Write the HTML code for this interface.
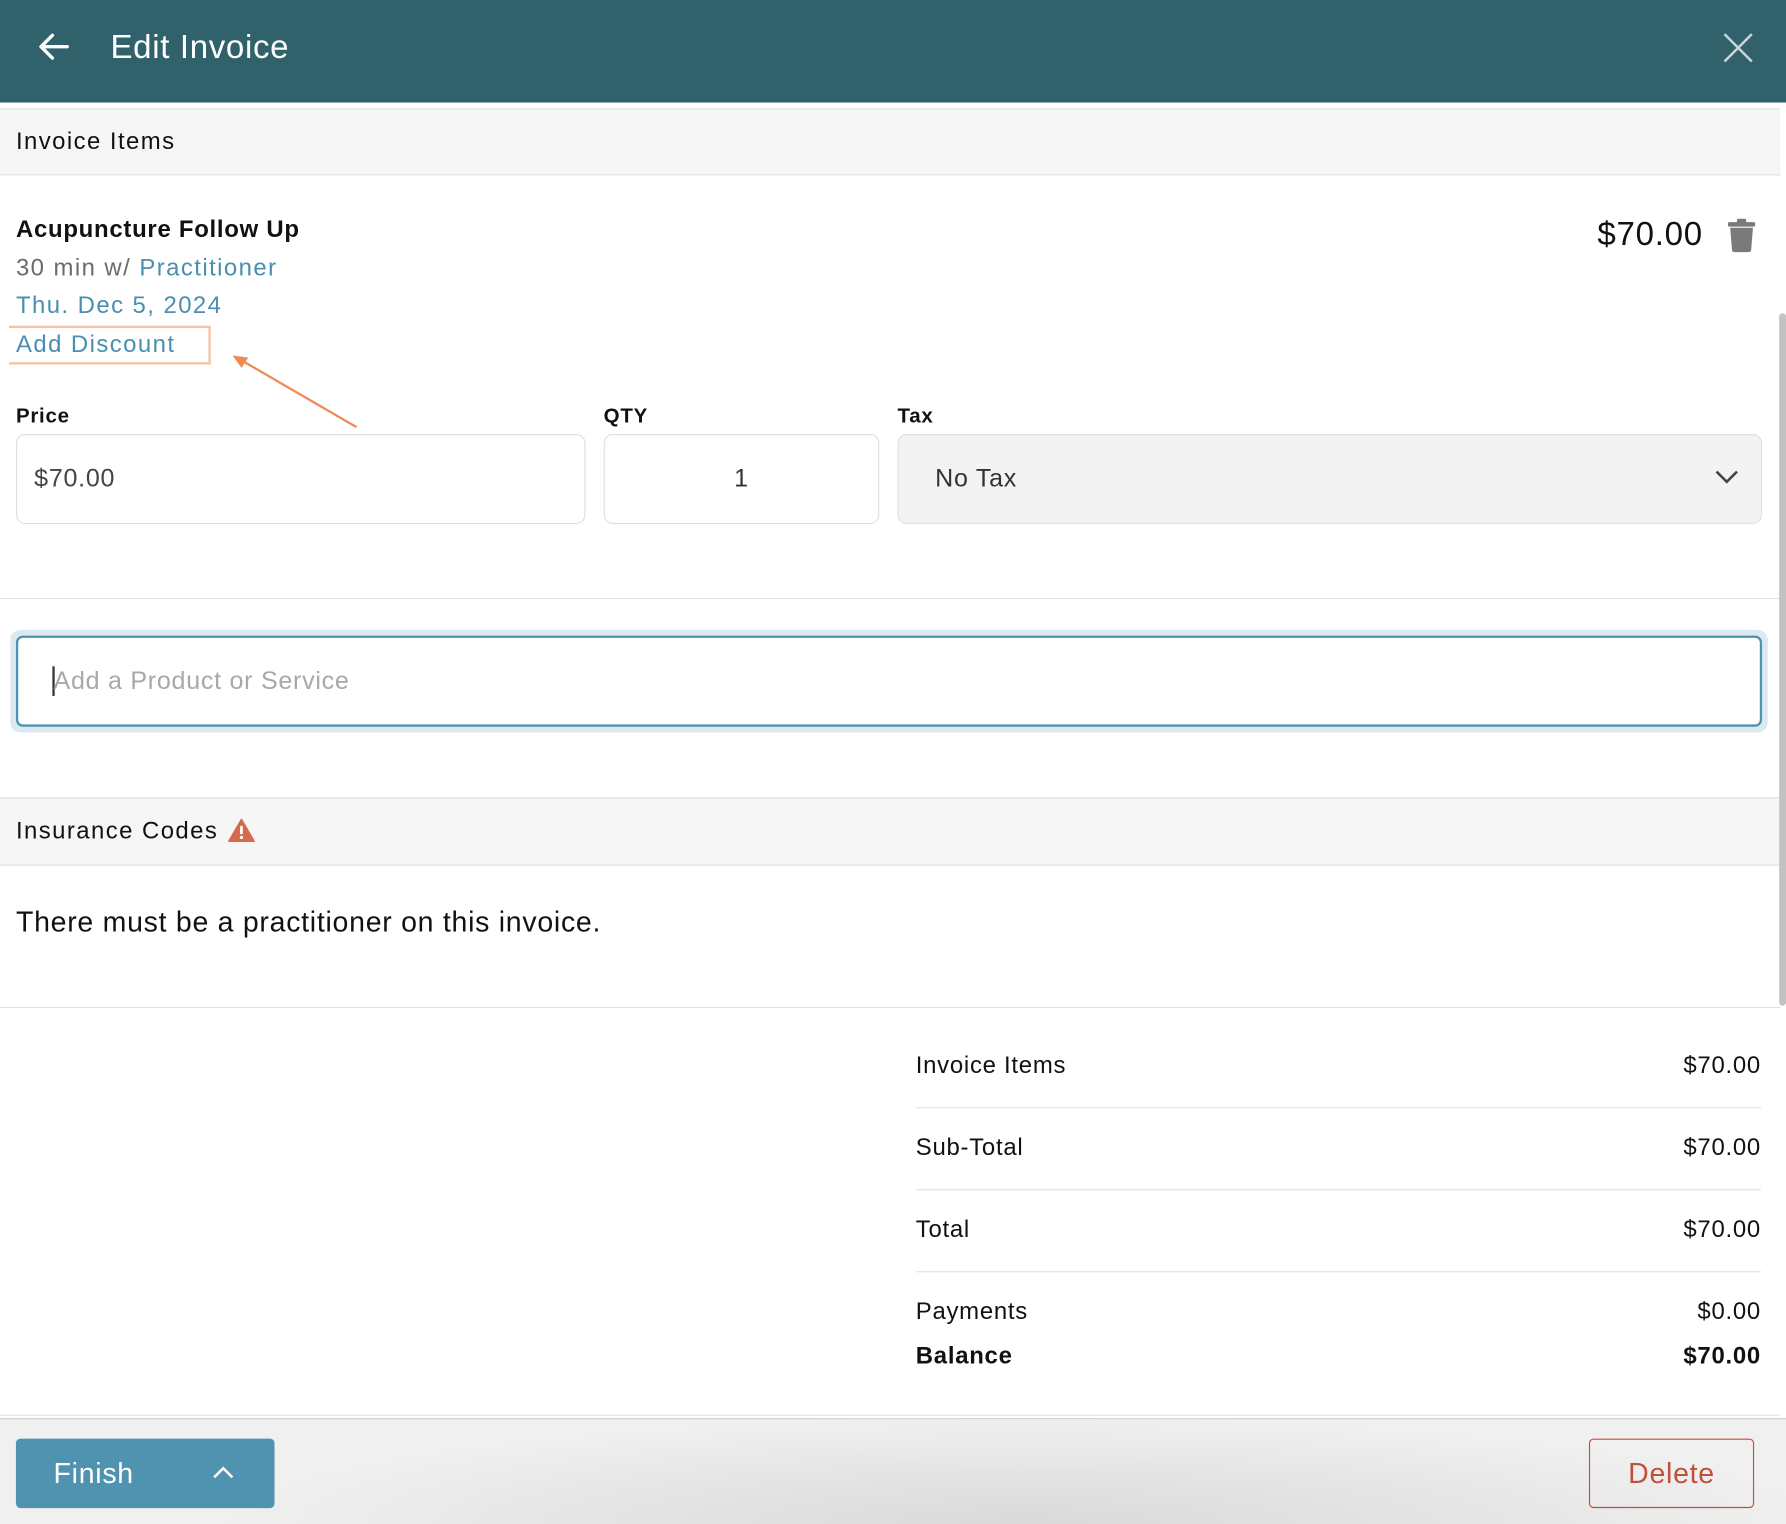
<!DOCTYPE html>
<html><head><meta charset="utf-8"><style>
*{margin:0;padding:0;box-sizing:border-box}
html,body{width:1786px;height:1524px;overflow:hidden;background:#fff}
#w{position:absolute;left:0;top:0;width:1568px;height:1338px;transform:scale(1.13903);transform-origin:0 0;font-family:"Liberation Sans",sans-serif;color:#111;letter-spacing:0.04em}
.a{position:absolute;white-space:nowrap}
.t{position:absolute;white-space:nowrap;line-height:30px;height:30px}
.line{position:absolute;height:1px;background:#e2e2e2}
.box{position:absolute;border:1px solid #e0e0e0;border-radius:8px;background:#fff}
</style></head><body><div id="w">
<div class="a" style="left:0;top:0;width:1568px;height:90px;background:#31626c"></div>
<svg class="a" style="left:32px;top:28px" width="30" height="26" viewBox="0 0 30 26"><path d="M27 13H5M14 3L4 13l10 10" stroke="#fff" stroke-width="3" fill="none" stroke-linecap="round" stroke-linejoin="round"/></svg>
<div class="t" style="left:97px;top:24px;font-size:29px;line-height:36px;height:36px;color:#fff;letter-spacing:0.02em">Edit Invoice</div>
<svg class="a" style="left:1512px;top:28px" width="28" height="28" viewBox="0 0 28 28"><path d="M2 2L26 26M26 2L2 26" stroke="#c9d6d9" stroke-width="2.2"/></svg>

<div class="a" style="left:0;top:95px;width:1563px;height:59px;background:#f6f6f6;border-top:1px solid #e0e0e0;border-bottom:1px solid #e0e0e0"></div>
<div class="t" style="left:14px;top:110px;font-size:21px;letter-spacing:0.06em">Invoice Items</div>

<div class="t" style="left:14px;top:187px;font-size:21px;font-weight:bold">Acupuncture Follow Up</div>
<div class="t" style="left:14px;top:221px;font-size:21px;color:#6b6b6b;letter-spacing:0.06em">30 min w/ <span style="color:#4a8fb0">Practitioner</span></div>
<div class="t" style="left:14px;top:254px;font-size:21px;color:#4a8fb0;letter-spacing:0.06em">Thu. Dec 5, 2024</div>
<div class="a" style="left:8px;top:286px;width:177px;height:34px;border:2px solid #f6c2a4;border-left:none"></div>
<div class="t" style="left:14px;top:288px;font-size:21px;color:#4a8fb0;letter-spacing:0.06em">Add Discount</div>
<svg class="a" style="left:200px;top:305px" width="120" height="75" viewBox="0 0 120 75"><path d="M113 70L8 9" stroke="#ef8b55" stroke-width="2"/><path d="M4 7L18 9L12 18Z" fill="#ef8b55"/></svg>
<div class="t" style="left:1302px;width:193px;text-align:right;top:189px;font-size:29px;line-height:34px;height:34px">$70.00</div>
<svg class="a" style="left:1516px;top:191px" width="26" height="31" viewBox="0 0 26 31"><rect x="1" y="4" width="24" height="4" rx="1.5" fill="#7a7a7a"/><rect x="9" y="1" width="8" height="4" rx="1" fill="#7a7a7a"/><path d="M3 9h20l-1.6 19.5a2 2 0 0 1-2 1.8H6.6a2 2 0 0 1-2-1.8z" fill="#7a7a7a"/></svg>

<div class="t" style="left:14px;top:350px;font-size:18px;font-weight:bold">Price</div>
<div class="t" style="left:530px;top:350px;font-size:18px;font-weight:bold">QTY</div>
<div class="t" style="left:788px;top:350px;font-size:18px;font-weight:bold">Tax</div>
<div class="box" style="left:14px;top:381px;width:500px;height:79px"></div>
<div class="t" style="left:30px;top:405px;font-size:22px;color:#444">$70.00</div>
<div class="box" style="left:530px;top:381px;width:242px;height:79px"></div>
<div class="t" style="left:530px;top:405px;width:242px;text-align:center;font-size:22px;color:#333">1</div>
<div class="box" style="left:788px;top:381px;width:759px;height:79px;background:#f3f3f3"></div>
<div class="t" style="left:821px;top:405px;font-size:22px;color:#333">No Tax</div>
<svg class="a" style="left:1505px;top:412px" width="22" height="14" viewBox="0 0 22 14"><path d="M2 2l9 9 9-9" stroke="#444" stroke-width="2.2" fill="none"/></svg>

<div class="line" style="left:0;top:525px;width:1563px"></div>
<div class="a" style="left:9px;top:553px;width:1543px;height:90px;border-radius:9px;background:#dbe9f0"></div>
<div class="a" style="left:14px;top:558px;width:1533px;height:80px;border:2px solid #4e93b0;border-radius:6px;background:#fff"></div>
<div class="a" style="left:46px;top:585px;width:2px;height:26px;background:#333"></div>
<div class="t" style="left:47px;top:583px;font-size:22px;color:#a8a8a8">Add a Product or Service</div>

<div class="a" style="left:0;top:700px;width:1563px;height:60px;background:#f6f6f6;border-top:1px solid #e0e0e0;border-bottom:1px solid #e0e0e0"></div>
<div class="t" style="left:14px;top:715px;font-size:21px;letter-spacing:0.06em">Insurance Codes</div>
<svg class="a" style="left:200px;top:718px" width="24" height="22" viewBox="0 0 24 22"><path d="M12 1.5L23 20.5H1z" fill="#d66a4f" stroke="#d66a4f" stroke-width="1.5" stroke-linejoin="round"/><rect x="10.8" y="7" width="2.4" height="7.5" rx="1" fill="#fff"/><circle cx="12" cy="17.3" r="1.4" fill="#fff"/></svg>
<div class="t" style="left:14px;top:795px;font-size:25px">There must be a practitioner on this invoice.</div>
<div class="line" style="left:0;top:884px;width:1563px"></div>

<div class="t" style="left:804px;top:921px;font-size:21px">Invoice Items</div><div class="t" style="left:1246px;width:300px;text-align:right;top:921px;font-size:21px">$70.00</div>
<div class="line" style="left:804px;top:972px;width:742px"></div>
<div class="t" style="left:804px;top:993px;font-size:21px">Sub-Total</div><div class="t" style="left:1246px;width:300px;text-align:right;top:993px;font-size:21px">$70.00</div>
<div class="line" style="left:804px;top:1044px;width:742px"></div>
<div class="t" style="left:804px;top:1065px;font-size:21px">Total</div><div class="t" style="left:1246px;width:300px;text-align:right;top:1065px;font-size:21px">$70.00</div>
<div class="line" style="left:804px;top:1116px;width:742px"></div>
<div class="t" style="left:804px;top:1137px;font-size:21px">Payments</div><div class="t" style="left:1246px;width:300px;text-align:right;top:1137px;font-size:21px">$0.00</div>
<div class="t" style="left:804px;top:1176px;font-size:21px;font-weight:bold">Balance</div><div class="t" style="left:1246px;width:300px;text-align:right;top:1176px;font-size:21px;font-weight:bold">$70.00</div>

<div class="a" style="left:1562px;top:275px;width:6px;height:608px;background:#c2c2c2;border-radius:3px"></div>

<div class="line" style="left:0;top:1242px;width:1563px"></div>
<div class="a" style="left:0;top:1245px;width:1568px;height:93px;border-top:1px solid #cfcfcf;background:radial-gradient(ellipse 900px 120px at 900px 93px,#d9d9d9,#f0f0f0 80%)"></div>
<div class="a" style="left:14px;top:1263px;width:227px;height:61px;background:#4f93b1;border-radius:4px"></div>
<div class="t" style="left:47px;top:1279px;font-size:25px;color:#fff">Finish</div>
<svg class="a" style="left:186px;top:1286px" width="20" height="13" viewBox="0 0 20 13"><path d="M2 11l8-8 8 8" stroke="#fff" stroke-width="2.2" fill="none"/></svg>
<div class="a" style="left:1395px;top:1263px;width:145px;height:61px;border:1px solid #c0503a;border-radius:4px"></div>
<div class="t" style="left:1395px;width:145px;text-align:center;top:1279px;font-size:25px;color:#c0503a">Delete</div>
</div></body></html>
